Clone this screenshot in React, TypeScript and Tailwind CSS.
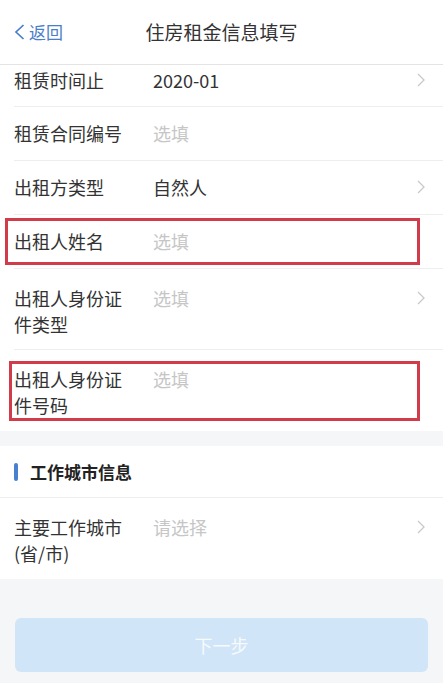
const font = "font-['Noto_Sans_CJK_SC','Noto_Sans',sans-serif]";

function Chevron() {
  return (
    <svg width="8" height="14" viewBox="0 0 8 14" className="shrink-0">
      <path d="M1 1l6 6-6 6" fill="none" stroke="#c9c9c9" strokeWidth="1.3" />
    </svg>
  );
}

type RowProps = {
  label: string;
  value: string;
  placeholder?: boolean;
  arrow?: boolean;
  tall?: boolean;
  border?: boolean;
  mark?: string;
};

function Row({ label, value, placeholder, arrow, tall, border = true, mark }: RowProps) {
  return (
    <div
      className={`relative flex items-start pl-[14px] pr-[18px] ${
        tall ? "h-[81px] pt-[16px]" : "h-[54px] pt-[13px]"
      }`}
    >
      <div className="w-[139px] shrink-0 pr-[27px] text-[18px] leading-[26px] text-[#333]">{label}</div>
      <div
        className={`flex-1 text-[18px] leading-[26px] ${placeholder ? "text-[#c6c6c6]" : "text-[#333]"}`}
      >
        {value}
      </div>
      {arrow && (
        <div className="flex h-[26px] items-center">
          <Chevron />
        </div>
      )}
      {border && <div className="absolute right-0 bottom-0 left-[14px] h-px bg-[#eeeeee]"></div>}
      {mark && <div className={`absolute border-[3px] border-[#d13b4a] ${mark}`}></div>}
    </div>
  );
}

export default function App() {
  return (
    <div className={`h-[683px] w-[443px] overflow-hidden bg-[#f4f6f8] ${font}`}>
      <header className="relative flex h-[65px] items-center justify-center border-b border-[#e3e3e3] bg-white">
        <div className="absolute left-[14px] flex items-center gap-[4px] text-[#4a7ec8]">
          <svg width="11" height="16" viewBox="0 0 11 16">
            <path d="M9.5 1L2 8l7.5 7" fill="none" stroke="#4a7ec8" strokeWidth="1.7" />
          </svg>
          <span className="text-[17px]">返回</span>
        </div>
        <h1 className="text-[19px] text-[#333]">住房租金信息填写</h1>
      </header>

      <div className="bg-white">
        <div className="relative flex h-[42px] items-start pt-[2px] pr-[18px] pl-[14px]">
          <div className="w-[139px] shrink-0 text-[18px] leading-[26px] text-[#333]">租赁时间止</div>
          <div className="flex-1 text-[18px] leading-[26px] text-[#333]">2020-01</div>
          <div className="flex h-[26px] items-center">
            <Chevron />
          </div>
          <div className="absolute right-0 bottom-0 left-[14px] h-px bg-[#eeeeee]"></div>
        </div>
        <Row label="租赁合同编号" value="选填" placeholder />
        <Row label="出租方类型" value="自然人" arrow />
        <Row
          label="出租人姓名"
          value="选填"
          placeholder
          mark="left-[5px] top-[3px] h-[47px] w-[415px]"
        />
        <Row label="出租人身份证件类型" value="选填" placeholder arrow tall />
        <Row
          label="出租人身份证件号码"
          value="选填"
          placeholder
          tall
          border={false}
          mark="left-[9px] top-[11px] h-[60px] w-[411px]"
        />
      </div>

      <div className="mt-[15px] bg-white">
        <div className="flex h-[52px] items-center gap-[12px] border-b border-[#eeeeee] pl-[14px]">
          <span className="h-[18px] w-[4px] rounded-full bg-[#4a80d0]"></span>
          <span className="text-[17px] font-bold text-[#222]">工作城市信息</span>
        </div>
        <Row label="主要工作城市(省/市)" value="请选择" placeholder arrow tall border={false} />
      </div>

      <div className="px-[15px] pt-[39px]">
        <button className="flex h-[54px] w-full items-center justify-center rounded-[6px] bg-[#d1e5f8] text-[18px] text-[#f7fafd]">
          下一步
        </button>
      </div>
    </div>
  );
}
